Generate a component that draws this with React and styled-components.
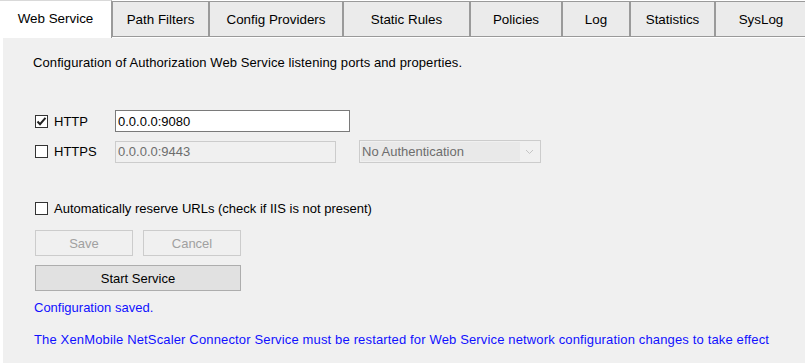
import React from 'react'
import styled, { createGlobalStyle } from 'styled-components'

const GlobalStyle = createGlobalStyle`
    body {
        margin: 0;
        background: #fff;
        font-family: "Liberation Sans", Arial, sans-serif;
        color: #000;
    }
`

export const StyledWindow = styled.div`
    width: 805px;
    height: 363px;
    overflow: hidden;
    background: #fff;
`

export const StyledTabStrip = styled.div`
    display: flex;
    height: 38px;
    align-items: flex-end;
`

export const StyledTab = styled.div`
    box-sizing: border-box;
    flex: 0 0 ${p => p.$w}px;
    height: ${p => (p.$active ? 38 : 36)}px;
    display: flex;
    align-items: center;
    justify-content: center;
    font-size: 13.4px;
    background: ${p => (p.$active ? '#fff' : '#ebebeb')};
    border: 1px solid #9a9a9a;
    border-left: ${p => (p.$active ? 'none' : '1px solid #9a9a9a')};
    border-top-color: ${p => (p.$active ? '#d9d9d9' : '#9a9a9a')};
    border-bottom: ${p => (p.$active ? 'none' : '1px solid #9a9a9a')};
    padding-bottom: ${p => (p.$active ? 2 : 0)}px;
    margin-bottom: ${p => (p.$active ? 0 : 1)}px;
    align-self: ${p => (p.$active ? 'flex-start' : 'flex-end')};
`

export const StyledPanel = styled.div`
    margin-left: 3px;
    height: 325px;
    background: #f0f0f0;
    padding: 17px 0 0 31px;
    box-sizing: border-box;
    display: flex;
    flex-direction: column;
    font-size: 13px;
`

export const StyledText = styled.div`
    line-height: 16px;
    margin-left: ${p => p.$ml || 0}px;
    margin-top: ${p => p.$mt || 0}px;
    color: ${p => p.$blue ? '#1010ff' : '#000'};
    letter-spacing: ${p => p.$ls || 0}px;
    white-space: nowrap;
`

export const StyledRow = styled.div`
    display: flex;
    align-items: center;
    margin-top: ${p => p.$mt || 0}px;
`

export const StyledCheckLabel = styled.label`
    display: flex;
    align-items: center;
    width: ${p => p.$w ? `${p.$w}px` : 'auto'};
    margin-left: 1px;
    font-size: 13px;
    line-height: 15px;
`

export const StyledBox = styled.span`
    box-sizing: border-box;
    width: 13px;
    height: 13px;
    border: 1px solid #333;
    background: #fff;
    display: flex;
    align-items: center;
    justify-content: center;
    margin-right: 6px;
`

export const StyledInput = styled.div`
    box-sizing: border-box;
    width: ${p => p.$w}px;
    height: 22px;
    border: 1px solid ${p => p.$disabled ? '#cccccc' : '#7a7a7a'};
    background: ${p => p.$disabled ? '#f0f0f0' : '#fff'};
    color: ${p => p.$disabled ? '#6d6d6d' : '#000'};
    font-size: 13px;
    padding-left: 2px;
    display: flex;
    align-items: center;
`

export const StyledSelect = styled.div`
    box-sizing: border-box;
    width: 182px;
    height: 23px;
    margin-left: 23px;
    border: 1px solid #cccccc;
    background: #f0f0f0;
    padding: 1px;
    display: flex;
    align-items: stretch;
    color: #6d6d6d;
    font-size: 13px;
`

export const StyledSelectValue = styled.div`
    flex: 1;
    background: #e9e9e9;
    display: flex;
    align-items: center;
    padding-left: 1px;
`

export const StyledArrow = styled.div`
    width: 19px;
    display: flex;
    align-items: center;
    justify-content: center;
`

export const StyledButton = styled.div`
    box-sizing: border-box;
    width: ${p => p.$w}px;
    height: 26px;
    margin-left: ${p => p.$ml || 0}px;
    border: 1px solid ${p => p.$disabled ? '#cccccc' : '#adadad'};
    background: ${p => p.$disabled ? '#f0f0f0' : '#e1e1e1'};
    color: ${p => p.$disabled ? '#a0a0a0' : '#000'};
    display: flex;
    align-items: center;
    justify-content: center;
    font-size: 13px;
`

const tabs = [
    ['Web Service', 112],
    ['Path Filters', 97],
    ['Config Providers', 134],
    ['Static Rules', 127],
    ['Policies', 92],
    ['Log', 68],
    ['Statistics', 85],
    ['SysLog', 92],
]

const Check = ({ checked, label, w }) => (
    <StyledCheckLabel $w={w}>
        <StyledBox>
            {checked && (
                <svg width="11" height="11" viewBox="0 0 11 11">
                    <path d="M1.5 5.5 L4 8.2 L9.5 1.8" fill="none" stroke="#222" strokeWidth="2" />
                </svg>
            )}
        </StyledBox>
        {label}
    </StyledCheckLabel>
)

const App = () => {
    return (
        <>
            <GlobalStyle />
            <StyledWindow>
                <StyledTabStrip>
                    {tabs.map(([name, w], i) => (
                        <StyledTab key={name} $w={w} $active={i === 0}>{name}</StyledTab>
                    ))}
                </StyledTabStrip>
                <StyledPanel>
                    <StyledText $ml={-1} $ls={0.1}>Configuration of Authorization Web Service listening ports and properties.</StyledText>
                    <StyledRow $mt={39}>
                        <Check checked label="HTTP" w={80} />
                        <StyledInput $w={235}>0.0.0.0:9080</StyledInput>
                    </StyledRow>
                    <StyledRow $mt={8}>
                        <Check label="HTTPS" w={80} />
                        <StyledInput $w={221} $disabled>0.0.0.0:9443</StyledInput>
                        <StyledSelect>
                            <StyledSelectValue>No Authentication</StyledSelectValue>
                            <StyledArrow>
                                <svg width="9" height="6" viewBox="0 0 9 6">
                                    <path d="M1 1 L4.5 4.5 L8 1" fill="none" stroke="#c4c4c4" strokeWidth="1" />
                                </svg>
                            </StyledArrow>
                        </StyledSelect>
                    </StyledRow>
                    <StyledRow $mt={38}>
                        <Check label="Automatically reserve URLs (check if IIS is not present)" />
                    </StyledRow>
                    <StyledRow $mt={14}>
                        <StyledButton $w={98} $ml={1} $disabled>Save</StyledButton>
                        <StyledButton $w={98} $ml={10} $disabled>Cancel</StyledButton>
                    </StyledRow>
                    <StyledRow $mt={9}>
                        <StyledButton $w={206} $ml={1}>Start Service</StyledButton>
                    </StyledRow>
                    <StyledText $blue $mt={9}>Configuration saved.</StyledText>
                    <StyledText $blue $mt={16} $ls={0.15}>The XenMobile NetScaler Connector Service must be restarted for Web Service network configuration changes to take effect</StyledText>
                </StyledPanel>
            </StyledWindow>
        </>
    )
}

export default App
